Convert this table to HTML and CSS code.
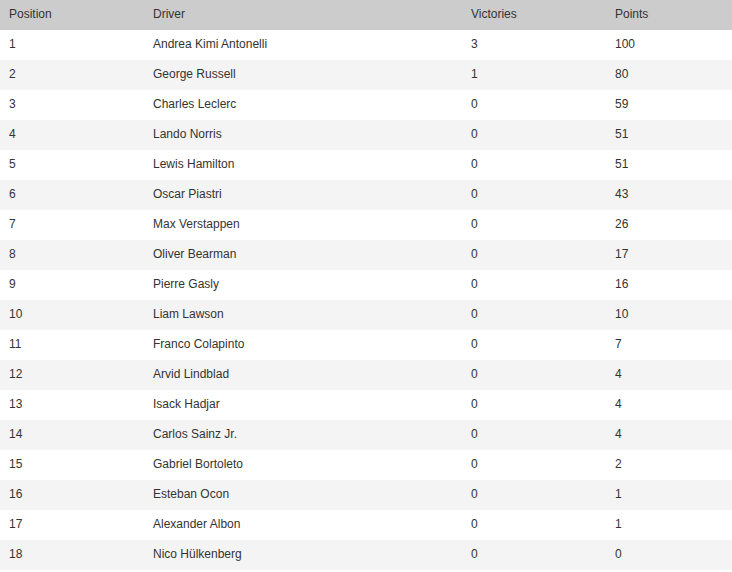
FILE: index.html
```html
<!DOCTYPE html>
<html>
<head>
<meta charset="utf-8">
<link rel="stylesheet" href="styles.css">
</head>
<body>
<table class="standings">
  <colgroup>
    <col class="c-pos"><col class="c-driver"><col class="c-wins"><col class="c-pts">
  </colgroup>
  <thead>
    <tr><th>Position</th><th>Driver</th><th>Victories</th><th>Points</th></tr>
  </thead>
  <tbody>
    <tr><td>1</td><td>Andrea Kimi Antonelli</td><td>3</td><td>100</td></tr>
    <tr><td>2</td><td>George Russell</td><td>1</td><td>80</td></tr>
    <tr><td>3</td><td>Charles Leclerc</td><td>0</td><td>59</td></tr>
    <tr><td>4</td><td>Lando Norris</td><td>0</td><td>51</td></tr>
    <tr><td>5</td><td>Lewis Hamilton</td><td>0</td><td>51</td></tr>
    <tr><td>6</td><td>Oscar Piastri</td><td>0</td><td>43</td></tr>
    <tr><td>7</td><td>Max Verstappen</td><td>0</td><td>26</td></tr>
    <tr><td>8</td><td>Oliver Bearman</td><td>0</td><td>17</td></tr>
    <tr><td>9</td><td>Pierre Gasly</td><td>0</td><td>16</td></tr>
    <tr><td>10</td><td>Liam Lawson</td><td>0</td><td>10</td></tr>
    <tr><td>11</td><td>Franco Colapinto</td><td>0</td><td>7</td></tr>
    <tr><td>12</td><td>Arvid Lindblad</td><td>0</td><td>4</td></tr>
    <tr><td>13</td><td>Isack Hadjar</td><td>0</td><td>4</td></tr>
    <tr><td>14</td><td>Carlos Sainz Jr.</td><td>0</td><td>4</td></tr>
    <tr><td>15</td><td>Gabriel Bortoleto</td><td>0</td><td>2</td></tr>
    <tr><td>16</td><td>Esteban Ocon</td><td>0</td><td>1</td></tr>
    <tr><td>17</td><td>Alexander Albon</td><td>0</td><td>1</td></tr>
    <tr><td>18</td><td>Nico Hülkenberg</td><td>0</td><td>0</td></tr>
  </tbody>
</table>
</body>
</html>
```
FILE: styles.css
```css
html, body {
  margin: 0;
  padding: 0;
  background: #ffffff;
}
.standings {
  width: 732px;
  border-collapse: collapse;
  table-layout: fixed;
  font-family: "Liberation Sans", Arial, sans-serif;
  font-size: 12px;
  color: #333333;
}
.c-pos { width: 144px; }
.c-driver { width: 318px; }
.c-wins { width: 144px; }
.c-pts { width: 126px; }
.standings th,
.standings td {
  height: 30px;
  padding: 0 8px 2px 9px;
  text-align: left;
  font-weight: normal;
  box-sizing: border-box;
  white-space: nowrap;
}
.standings th {
  background: #cccccc;
}
.standings tbody tr:nth-child(even) td {
  background: #f4f4f4;
}
```
